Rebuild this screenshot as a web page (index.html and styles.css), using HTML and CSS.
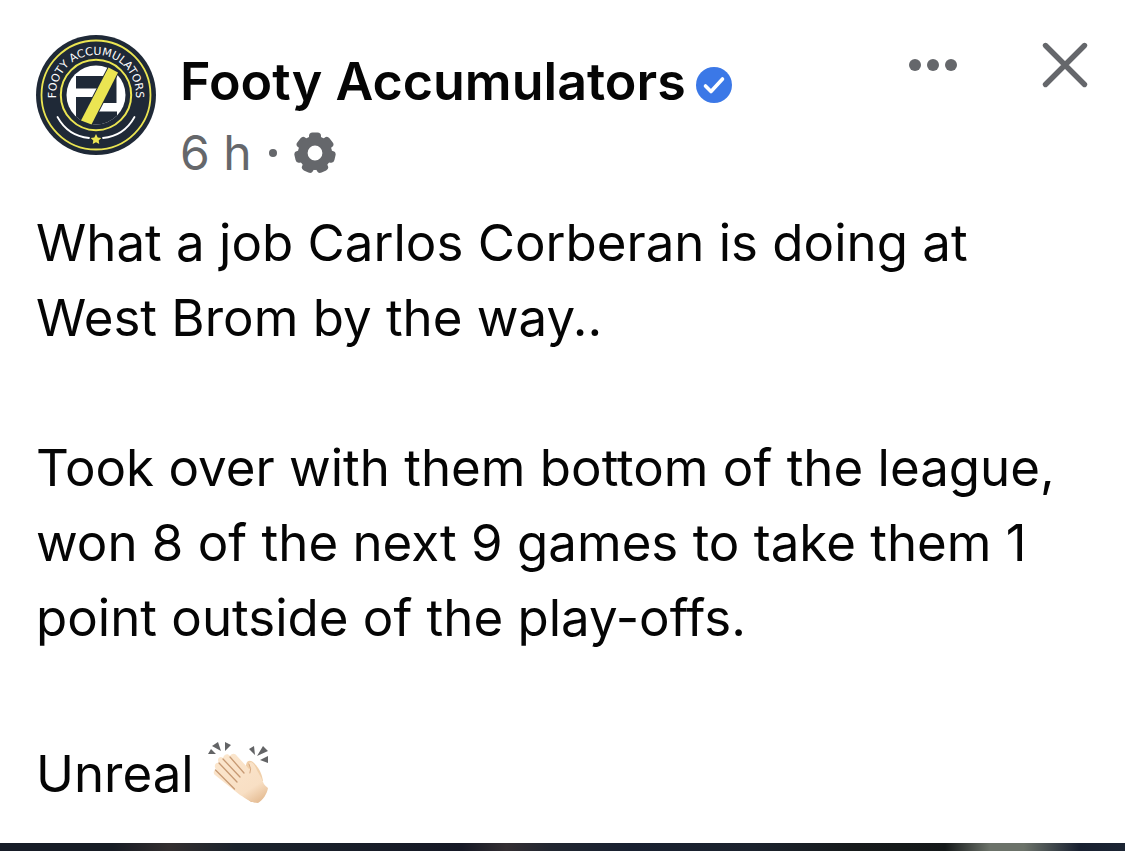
FILE: index.html
```html
<!DOCTYPE html>
<html lang="en">
<head>
<meta charset="utf-8">
<title>Footy Accumulators</title>
<link rel="stylesheet" href="styles.css">
</head>
<body>

<article class="post">
  <header class="post-header">
    <a class="avatar" href="#" aria-label="Footy Accumulators">
      <svg viewBox="0 0 120 120">
        <defs>
          <path id="ring" d="M26.400 81.500A40 40 0 1 1 93.600 81.500"/>
          <clipPath id="disc"><circle cx="60" cy="60" r="29.500"/></clipPath>
        </defs>
        <circle cx="60" cy="60" r="60" fill="#1f2937"/>
        <circle cx="60" cy="60" r="54.500" fill="none" stroke="#ebe552" stroke-width="1.800"/>
        <circle cx="60" cy="60" r="35.200" fill="none" stroke="#ebe552" stroke-width="2"/>
        <circle cx="60" cy="60" r="29.500" fill="#fff"/>
        <g clip-path="url(#disc)">
          <path fill="#1f2937" d="M40 41H71L64 53.500H40zM40 62H60L48 90H40zM80.500 40V68H62L76 38zM57 76.500H81V90H50z"/>
        </g>
        <path class="slash" d="M72.500 32.500L82 37.500L55.500 89.500L45 85.500z"/>
        <path d="M21.500 82Q32 101 53 103M98.500 82Q88 101 67 103" fill="none" stroke="#fff" stroke-width="1.800" stroke-linecap="round"/>
        <path fill="#ebe552" d="M60 99l1.700 3.400 3.600.5-2.600 2.500.6 3.600-3.300-1.700-3.300 1.700.6-3.600-2.600-2.500 3.600-.5z"/>
        <text class="logo-text"><textPath href="#ring" startOffset="50%">FOOTY ACCUMULATORS</textPath></text>
      </svg>
    </a>

    <div class="author">
      <h1 class="name">
        <a href="#">Footy Accumulators</a>
        <svg class="verified" viewBox="0 0 36 36" role="img" aria-label="Verified">
          <circle cx="18" cy="18" r="18" fill="#3b78e7"/>
          <path d="M9.500 19l5.500 5.500L26.500 12" fill="none" stroke="#fff" stroke-width="3.600" stroke-linecap="round" stroke-linejoin="round"/>
        </svg>
      </h1>
      <div class="meta">
        <span>6 h</span>
        <span class="dot"></span>
        <svg class="gear" viewBox="-21 -21 42 42" role="img" aria-label="Custom audience">
          <defs><rect id="tooth" x="-6" y="-20.500" width="12" height="12" rx="3.500"/></defs>
          <g fill="#65676b">
            <use href="#tooth"/>
            <use href="#tooth" transform="rotate(51.430)"/>
            <use href="#tooth" transform="rotate(102.860)"/>
            <use href="#tooth" transform="rotate(154.290)"/>
            <use href="#tooth" transform="rotate(205.710)"/>
            <use href="#tooth" transform="rotate(257.140)"/>
            <use href="#tooth" transform="rotate(308.570)"/>
          </g>
          <circle r="12.200" fill="none" stroke="#65676b" stroke-width="9.600"/>
        </svg>
      </div>
    </div>

    <div class="actions">
      <button type="button" aria-label="More options">
        <svg class="more" viewBox="0 0 48 48" fill="#65676b">
          <circle cx="6" cy="24" r="6"/>
          <circle cx="24" cy="24" r="6"/>
          <circle cx="42" cy="24" r="6"/>
        </svg>
      </button>
      <button type="button" aria-label="Close">
        <svg class="close" viewBox="0 0 48 48">
          <path d="M4.500 4.500l39 39M43.500 4.500l-39 39" fill="none" stroke="#65676b" stroke-width="5.400" stroke-linecap="round"/>
        </svg>
      </button>
    </div>
  </header>

  <div class="post-text">
    <p>What a job Carlos Corberan is doing at West Brom by the way..</p>
    <p>Took over with them bottom of the league, won 8 of the next 9 games to take them 1 point outside of the play-offs.</p>
    <p class="reaction">Unreal
      <svg class="clap" viewBox="0 0 64 64" role="img" aria-label="Clapping hands">
        <defs>
          <linearGradient id="skin" x1=".2" y1="0" x2=".9" y2="1">
            <stop offset="0" stop-color="#fbe6cd"/>
            <stop offset=".7" stop-color="#f8dfc4"/>
            <stop offset="1" stop-color="#e2b78c"/>
          </linearGradient>
        </defs>
        <path fill="#636466" d="M0 12l3-5 5 5zM4 4l6-4 3 9zM17 0l6 3-6 6zM41 7l5-3 1 9zM49 14l6-10 5 5zM52 18l8-4v7z"/>
        <path fill="#f0cfa9" d="M38 24c0-5 4-7 8-3 6 6 8 12 9 18l-9 1z"/>
        <path fill="#e5bd94" d="M34 53l9 7h5l-4-8z"/>
        <path fill="url(#skin)" d="M7 33c-3-3 0-6 2-5-4-3-2-8 2-7-3-4 1-8 4-5 1-4 5-5 7-2 2-3 5-3 7 0l12 13c2 1 1-3 0-6 3-2 5 1 7 5 2 5 5 8 7 14 1 3 3 4 5 6-1 6-5 12-10 15-7 0-11-4-18-8z"/>
        <path d="M7.500 28l19 19M11 21l18 19M15 17l17 18M22 15l14 16" fill="none" stroke="#c79a74" stroke-width="1.300" stroke-linecap="round"/>
        <path d="M41 22q3 5 1 9" fill="none" stroke="#d5a77f" stroke-width="1" stroke-linecap="round"/>
      </svg>
    </p>
  </div>

  <div class="post-photo"></div>
</article>

</body>
</html>
```
FILE: styles.css
```css
* {
  box-sizing: border-box;
}

body {
  margin: 0;
  background: #fff;
  color: #050505;
  font-family: Inter, "Liberation Sans", sans-serif;
}

svg {
  display: block;
}

a {
  color: inherit;
  text-decoration: none;
}

.post-header {
  display: flex;
  align-items: flex-start;
  padding: 35px 36px 0;
}

.avatar {
  flex: none;
  width: 120px;
  height: 120px;
  margin-right: 24px;
}

.slash {
  fill: #ebe552;
  stroke: #1f2937;
  stroke-width: 2px;
  paint-order: stroke;
}

.logo-text {
  fill: #fff;
  font-family: "DejaVu Sans", sans-serif;
  font-size: 11px;
  text-anchor: middle;
}

.author {
  flex: 1;
  padding-top: 15px;
}

.name {
  display: flex;
  align-items: center;
  gap: 10px;
  margin: 0;
  font-size: 52px;
  font-weight: 600;
  line-height: 64px;
}

.verified {
  width: 36px;
  height: 36px;
  margin-top: 6px;
}

.meta {
  display: flex;
  align-items: center;
  gap: 17px;
  color: #65676b;
  font-size: 48px;
  line-height: 78px;
}

.dot {
  width: 8px;
  height: 8px;
  border-radius: 50%;
  background: #65676b;
}

.gear {
  width: 42px;
  height: 42px;
}

.actions {
  display: flex;
  gap: 84px;
  padding-top: 6px;
}

button {
  padding: 0;
  border: none;
  background: none;
  cursor: pointer;
}

.more,
.close {
  width: 48px;
  height: 48px;
}

.post-text {
  padding: 13px 48px 26px 36px;
  font-size: 51px;
  line-height: 75px;
}

.post-text p {
  margin: 0 0 75px;
}

.post-text .reaction {
  display: flex;
  align-items: center;
  gap: 14px;
  margin: 0;
  line-height: 87px;
}

.clap {
  width: 64px;
  height: 64px;
}

.post-photo {
  height: 8px;
  background: linear-gradient(to right, #171c28 0%, #171c24 10%, #332e2f 15%, #1b232c 21%, #151825 41%, #332e32 45%, #212630 49%, #182030 56%, #1b222d 67%, #161a1b 76%, #141819 84%, #6b7269 88%, #6b7269 91%, #182030 96%, #1b2433 100%);
}
```
